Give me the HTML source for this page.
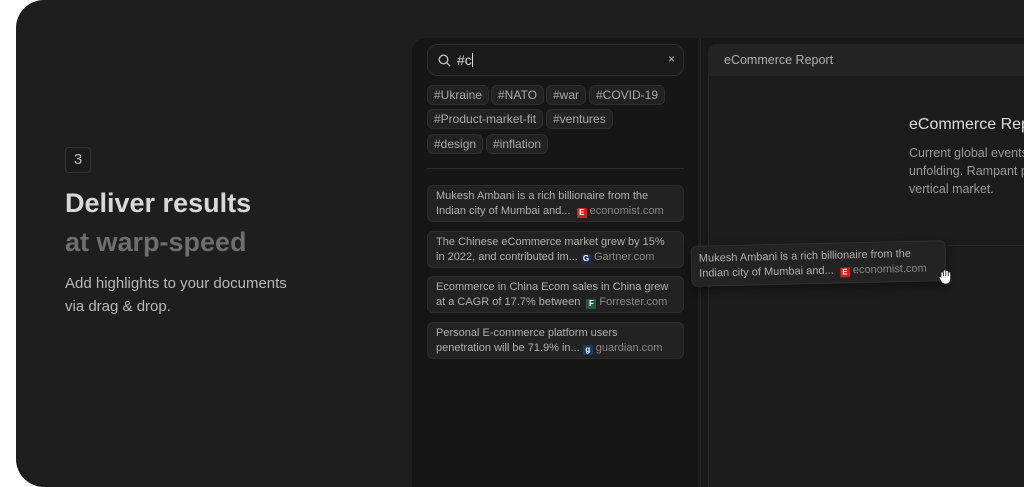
<!DOCTYPE html>
<html><head><style>
*{margin:0;padding:0;box-sizing:border-box}
body{width:1024px;height:487px;background:#fff;font-family:"Liberation Sans",Arial,sans-serif;overflow:hidden;position:relative}
.card{position:absolute;left:16px;top:0;width:1040px;height:487px;background:#1e1e1e;border-radius:28px;overflow:hidden}
.abs{position:absolute}
.num{left:49px;top:147px;width:26px;height:26px;border:1px solid #333;border-radius:4px;color:#bbb;font-size:15px;text-align:center;line-height:24px;background:#1b1b1b}
.h1{left:49px;top:188px;font-size:27px;font-weight:bold;color:#d8d8d8}
.h2{left:49px;top:227px;font-size:27px;font-weight:bold;color:#6e6e6e}
.p{left:49px;top:272px;font-size:15px;color:#b8b8b8;line-height:23px}
.lp{left:396px;top:38px;width:286px;height:460px;background:#161616;border-radius:14px 0 0 0}
.rp{left:684px;top:38px;width:400px;height:460px;background:#181818;border-left:1px solid #262626}
.search{left:411px;top:44px;width:257px;height:32px;border:1px solid #2e2e2e;border-radius:10px;background:#1a1a1a}
.tag{position:absolute;height:20px;border:1px solid #2e2e2e;border-radius:6px;background:#222;color:#aaa;font-size:12px;line-height:18px;padding:0 6px;white-space:nowrap}
.res{position:absolute;left:411px;width:257px;height:37px;background:#222;border:1px solid #2c2c2c;border-radius:6px;color:#b0b0b0;font-size:11px;line-height:15px;padding:3px 8px;white-space:nowrap;overflow:hidden}
.src{color:#888}
.ic{display:inline-block;width:10px;height:10px;font-size:8px;line-height:10px;text-align:center;color:#fff;font-weight:bold;vertical-align:-1px;margin-right:3px;border-radius:1px}
.doc{left:692px;top:44px;width:340px;height:460px;background:#1c1c1c;border:1px solid #2a2a2a;border-radius:8px}
.dh{left:692px;top:44px;width:340px;height:32px;background:#232323;border-radius:8px 8px 0 0;color:#b0b0b0;font-size:12.5px;line-height:32px;padding-left:16px}
</style></head><body>
<div class="card">
<div class="abs num">3</div>
<div class="abs h1">Deliver results</div>
<div class="abs h2">at warp-speed</div>
<div class="abs p">Add highlights to your documents<br>via drag &amp; drop.</div>
<div class="abs lp"></div>
<div class="abs rp"></div>
<div class="abs search">
<svg class="abs" style="left:10px;top:9px" width="13" height="13" viewBox="0 0 13 13"><circle cx="5.5" cy="5.5" r="4.3" fill="none" stroke="#bbb" stroke-width="1.4"/><path d="M8.7 8.7L12 12" stroke="#bbb" stroke-width="1.4"/></svg>
<div class="abs" style="left:29px;top:7px;color:#ddd;font-size:14px">#c<span style="display:inline-block;width:1px;height:14px;background:#ddd;vertical-align:-2px"></span></div>
<div class="abs" style="right:8px;top:7px;color:#bbb;font-size:12px">×</div>
</div>
<div class="tag" style="left:411px;top:85px">#Ukraine</div>
<div class="tag" style="left:475px;top:85px">#NATO</div>
<div class="tag" style="left:530px;top:85px">#war</div>
<div class="tag" style="left:573px;top:85px">#COVID-19</div>
<div class="tag" style="left:411px;top:109px">#Product-market-fit</div>
<div class="tag" style="left:530px;top:109px">#ventures</div>
<div class="tag" style="left:411px;top:134px">#design</div>
<div class="tag" style="left:470px;top:134px">#inflation</div>
<div class="abs" style="left:411px;top:168px;width:257px;height:1px;background:#2a2a2a"></div>
<div class="res" style="top:185px">Mukesh Ambani is a rich billionaire from the<br>Indian city of Mumbai and... &nbsp;<span class="ic" style="background:#c22">E</span><span class="src">economist.com</span></div>
<div class="res" style="top:231px">The Chinese eCommerce market grew by 15%<br>in 2022, and contributed im... <span class="ic" style="background:#1a2c5a">G</span><span class="src">Gartner.com</span></div>
<div class="res" style="top:276px">Ecommerce in China Ecom sales in China grew<br>at a CAGR of 17.7% between &nbsp;<span class="ic" style="background:#265a3a">F</span><span class="src">Forrester.com</span></div>
<div class="res" style="top:322px">Personal E-commerce platform users<br>penetration will be 71.9% in... <span class="ic" style="background:#1e3a6a">g</span><span class="src">guardian.com</span></div>
<div class="abs doc"></div>
<div class="abs dh">eCommerce Report</div>
<div class="abs" style="left:893px;top:116px;color:#ddd;font-size:16px">eCommerce Report</div>
<div class="abs" style="left:893px;top:144px;color:#999;font-size:12.5px;line-height:18px;white-space:nowrap">Current global events are<br>unfolding. Rampant price<br>vertical market.</div>
<div class="abs" style="left:932px;top:245px;width:100px;height:1px;background:#2a2a2a"></div>
<div class="abs" style="left:675px;top:243px;width:255px;height:41px;background:#232323;border:1px solid #303030;border-radius:6px;color:#b0b0b0;font-size:11px;line-height:15px;padding:5px 7px;white-space:nowrap;transform:rotate(-1.3deg);box-shadow:0 4px 10px rgba(0,0,0,.4)">Mukesh Ambani is a rich billionaire from the<br>Indian city of Mumbai and... &nbsp;<span class="ic" style="background:#c22">E</span><span class="src">economist.com</span></div>
<svg class="abs" style="left:921px;top:268px" width="18" height="18" viewBox="0 0 18 18"><path d="M4 9V5a1.2 1.2 0 0 1 2.4 0v3V3a1.2 1.2 0 0 1 2.4 0v5V3.5a1.2 1.2 0 0 1 2.4 0V8V5a1.2 1.2 0 0 1 2.4 0v6c0 3-2 5-5 5H8c-2 0-3-1-4-2.5L2 10a1.2 1.2 0 0 1 2-1z" fill="#fff" stroke="#222" stroke-width=".8"/></svg>
</div>
</body></html>
